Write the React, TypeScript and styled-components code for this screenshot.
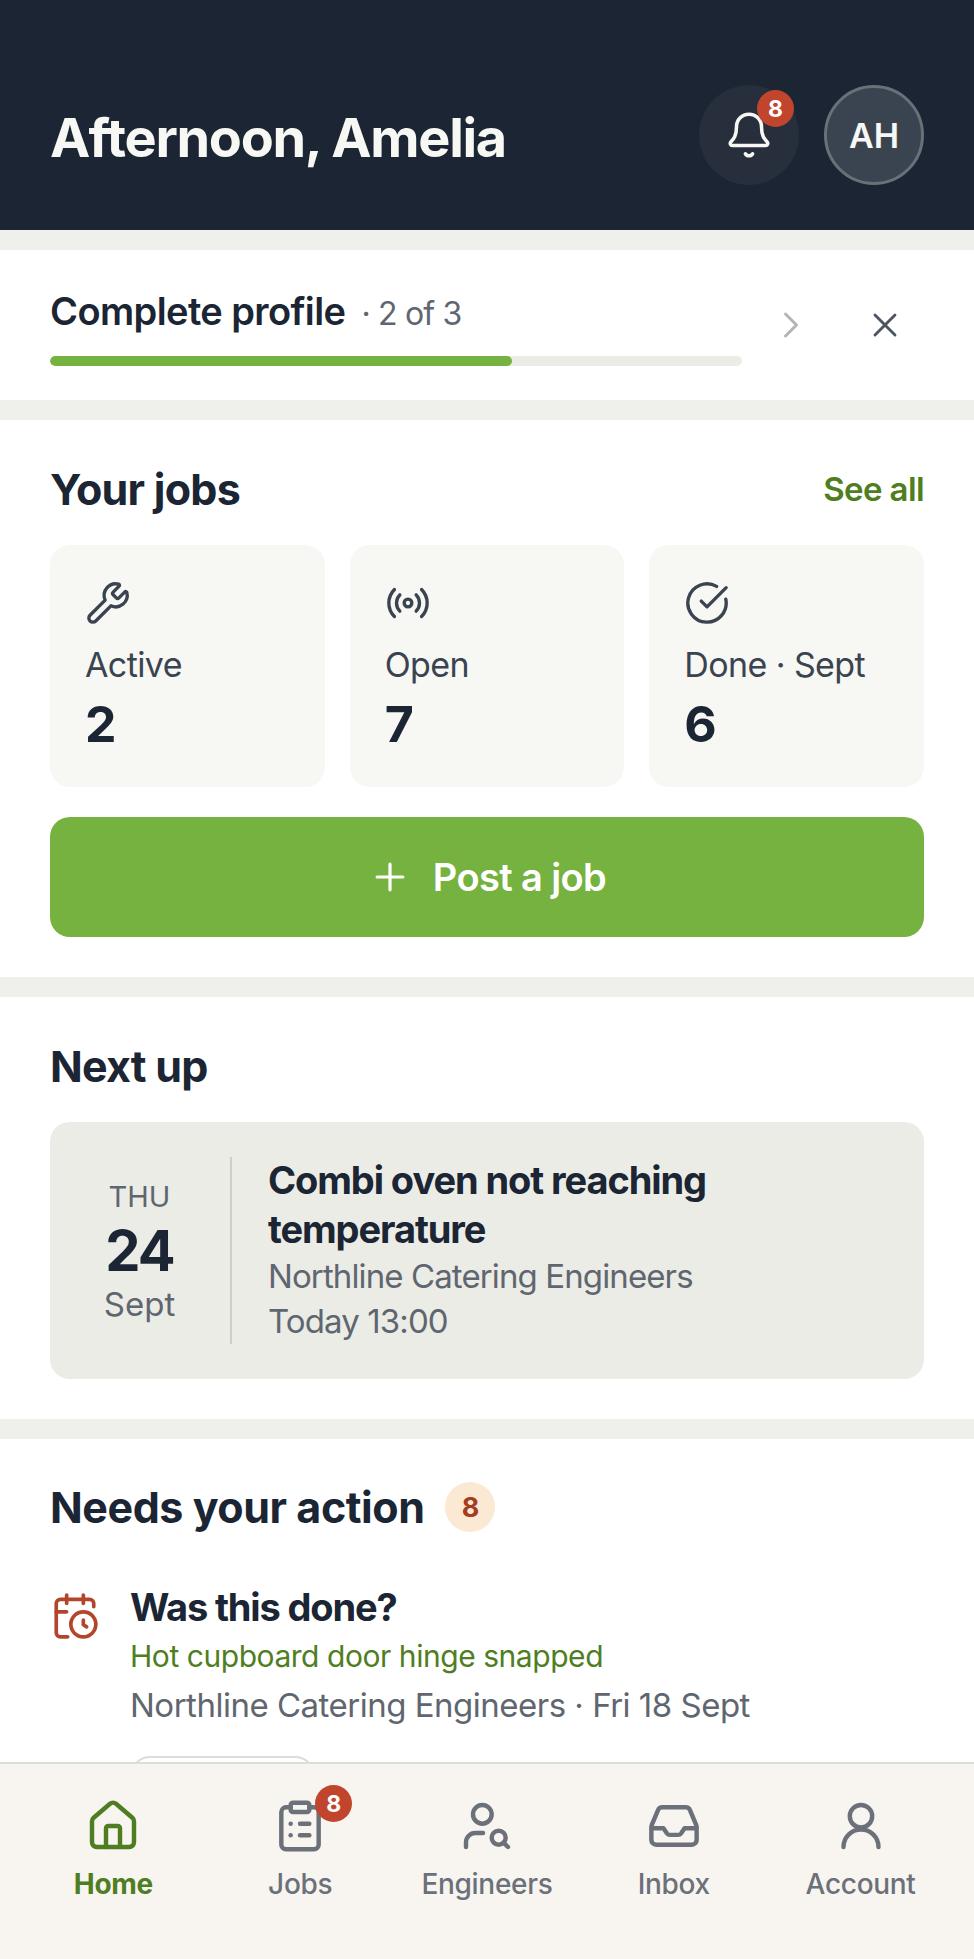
import React from 'react';
import styled, { createGlobalStyle } from 'styled-components';
import { Bell, CalendarClock, CircleCheckBig, ChevronRight, ClipboardList, House, Plus, Radio, UserSearch, Wrench, X } from 'lucide-react';

const GlobalStyle = createGlobalStyle`
  html, body {
    margin: 0;
    padding: 0;
    height: 100%;
    overflow: hidden;
    background: #eff0eb;
  }
  * {
    box-sizing: border-box;
  }
`;

const Screen = styled.div`
  display: flex;
  flex-direction: column;
  height: 100vh;
  font-family: Inter, 'Liberation Sans', sans-serif;
  color: #1b2533;
`;

const Content = styled.main`
  flex: 1;
  min-height: 0;
  overflow: hidden;
  display: flex;
  flex-direction: column;
  gap: 20px;
`;

const Header = styled.header`
  height: 230px;
  flex-shrink: 0;
  background: #1b2533;
  padding: 85px 50px 45px;
  display: flex;
  align-items: center;
  justify-content: space-between;
`;

const Greeting = styled.h1`
  margin: 5px 0 0;
  font-size: 54px;
  font-weight: 700;
  letter-spacing: -1.3px;
  color: #f7f7f3;
`;

const HeaderActions = styled.div`
  display: flex;
  gap: 25px;
`;

const BellButton = styled.div`
  position: relative;
  width: 100px;
  height: 100px;
  border-radius: 50%;
  background: #262f3b;
  display: flex;
  align-items: center;
  justify-content: center;
  color: #f7f7f3;
`;

const CountBadge = styled.span<{ top: number; right: number }>`
  position: absolute;
  top: ${p => p.top}px;
  right: ${p => p.right}px;
  width: 37px;
  height: 37px;
  border-radius: 50%;
  background: #c1452d;
  color: #fff;
  font-size: 23px;
  font-weight: 700;
  display: flex;
  align-items: center;
  justify-content: center;
`;

const Avatar = styled.div`
  width: 100px;
  height: 100px;
  border-radius: 50%;
  background: #3a4450;
  border: 3px solid #6a7077;
  color: #f7f7f3;
  font-size: 34px;
  font-weight: 600;
  display: flex;
  align-items: center;
  justify-content: center;
`;

const ProfileCard = styled.section`
  height: 150px;
  flex-shrink: 0;
  background: #fff;
  padding: 0 50px;
  display: flex;
  align-items: center;
`;

const ProfileInfo = styled.div`
  width: 692px;
  margin-top: 4px;
`;

const ProfileTitle = styled.div`
  display: flex;
  align-items: baseline;
  gap: 16px;
  font-size: 38px;
  font-weight: 600;
  letter-spacing: -0.6px;
  line-height: 44px;
`;

const ProfileStep = styled.span`
  font-size: 32px;
  font-weight: 400;
  letter-spacing: -0.8px;
  color: #5f6670;
`;

const ProgressTrack = styled.div`
  height: 10px;
  margin-top: 20px;
  border-radius: 5px;
  background: #ebece6;
  overflow: hidden;
`;

const ProgressFill = styled.div`
  height: 100%;
  border-radius: 5px;
  background: #76b23f;
`;

const ProfileActions = styled.div`
  margin-left: auto;
  display: flex;
  align-items: center;
  gap: 52px;
  padding-right: 19px;
`;

const Section = styled.section`
  flex-shrink: 0;
  background: #fff;
  padding: 34px 50px 40px;
`;

const ActionSection = styled(Section)`
  padding-top: 43px;
`;

const SectionHead = styled.div`
  display: flex;
  align-items: center;
  justify-content: space-between;
  height: 70px;
  margin-bottom: 21px;
`;

const SectionTitle = styled.h2`
  margin: 0;
  font-size: 43px;
  font-weight: 700;
  letter-spacing: -0.75px;
`;

const ActionSectionTitle = styled(SectionTitle)`
  letter-spacing: -0.45px;
`;

const SeeAll = styled.a`
  font-size: 33px;
  font-weight: 600;
  letter-spacing: -0.6px;
  color: #4f7e22;
`;

const StatGrid = styled.div`
  display: grid;
  grid-template-columns: repeat(3, 1fr);
  gap: 25px;
`;

const StatCard = styled.div`
  height: 242px;
  padding: 35px 35px 0;
  border-radius: 20px;
  background: #f7f7f3;
  color: #3a4450;
`;

const StatLabel = styled.div`
  margin-top: 13px;
  font-size: 34px;
  line-height: 44px;
  letter-spacing: -0.6px;
`;

const StatValue = styled.div`
  margin-top: 7px;
  font-size: 50px;
  line-height: 60px;
  font-weight: 700;
  color: #1b2533;
`;

const PostButton = styled.button`
  width: 100%;
  height: 120px;
  margin-top: 30px;
  border: 0;
  border-radius: 20px;
  background: #76b23f;
  color: #fff;
  font-family: inherit;
  font-size: 38px;
  font-weight: 600;
  letter-spacing: -0.6px;
  display: flex;
  align-items: center;
  justify-content: center;
  gap: 21px;
`;

const NextCard = styled.div`
  height: 257px;
  padding: 35px 35px;
  border-radius: 20px;
  background: #ebece6;
  display: flex;
`;

const DateBlock = styled.div`
  width: 147px;
  padding-right: 36px;
  border-right: 2px solid #cdcec9;
  display: flex;
  flex-direction: column;
  align-items: center;
  justify-content: center;
`;

const DateDay = styled.div`
  font-size: 29px;
  line-height: 36px;
  color: #5f6670;
`;

const DateNumber = styled.div`
  font-size: 56px;
  line-height: 68px;
  font-weight: 700;
  letter-spacing: -2px;
  padding-top: 2px;
`;

const DateMonth = styled.div`
  font-size: 33px;
  line-height: 38px;
  color: #5f6670;
`;

const NextInfo = styled.div`
  padding-left: 36px;
  margin-top: -1px;
`;

const NextTitle = styled.div`
  font-size: 38px;
  line-height: 49px;
  font-weight: 700;
  letter-spacing: -1.08px;
  width: 480px;
`;

const NextMeta = styled.div`
  font-size: 33px;
  line-height: 45px;
  letter-spacing: -0.89px;
  color: #5f6670;
`;

const ActionHead = styled.div`
  display: flex;
  align-items: center;
  gap: 21px;
  height: 50px;
`;

const ActionCount = styled.span`
  width: 50px;
  height: 50px;
  border-radius: 50%;
  background: #fbe9d3;
  color: #a33e1f;
  font-size: 27px;
  font-weight: 700;
  display: flex;
  align-items: center;
  justify-content: center;
`;

const ActionRow = styled.div`
  display: flex;
  gap: 30px;
  margin-top: 51px;
`;

const ActionIcon = styled.div`
  width: 50px;
  flex-shrink: 0;
  padding-top: 8px;
  color: #b2452a;
`;

const ActionTitle = styled.div`
  font-size: 38px;
  line-height: 49px;
  font-weight: 700;
  letter-spacing: -1.15px;
`;

const ActionJob = styled.div`
  font-size: 30px;
  line-height: 49px;
  letter-spacing: -0.45px;
  color: #4f7e22;
`;

const ActionMeta = styled.div`
  font-size: 33px;
  line-height: 48px;
  letter-spacing: -0.5px;
  color: #5f6670;
`;

const GhostButton = styled.button`
  display: block;
  width: 185px;
  height: 80px;
  margin-top: 27px;
  border: 2px solid #dcddd7;
  border-radius: 20px;
  background: #fff;
`;

const BottomNav = styled.nav`
  height: 197px;
  flex-shrink: 0;
  border-top: 2px solid #dcddd7;
  background: #f8f5f0;
  padding: 34px 20px 0;
  display: grid;
  grid-template-columns: repeat(5, 1fr);
`;

const NavItem = styled.div<{ active?: boolean }>`
  position: relative;
  display: flex;
  flex-direction: column;
  align-items: center;
  height: fit-content;
  gap: 13px;
  font-size: 28px;
  font-weight: ${p => (p.active ? 700 : 500)};
  letter-spacing: -0.3px;
  color: ${p => (p.active ? '#4f7e22' : '#6b7079')};
`;

const NavIcon = styled.div`
  position: relative;
  width: 56px;
  height: 56px;
`;

function InboxIcon({ size }: { size: number }) {
  return (
    <svg width={size} height={size} viewBox="0 0 24 24" fill="none" stroke="currentColor" strokeWidth={1.9} strokeLinecap="round" strokeLinejoin="round">
      <path d="M2.500 13h5l1.500 2.200c.3.400.7.600 1.200.600h3.600c.5 0 .9-.2 1.200-.6L16.500 13h5" />
      <path d="M7 4h10c.8 0 1.500.4 1.800 1.100l2.700 6.400c.1.300.2.600.2.900V18c0 1.100-.9 2-2 2H4.300c-1.100 0-2-.9-2-2v-5.600c0-.3.100-.6.200-.9l2.700-6.400C5.500 4.400 6.200 4 7 4Z" />
    </svg>
  );
}

function AccountIcon({ size }: { size: number }) {
  return (
    <svg width={size} height={size} viewBox="0 0 24 24" fill="none" stroke="currentColor" strokeWidth={1.9} strokeLinecap="round" strokeLinejoin="round">
      <circle cx="12" cy="7.800" r="4.800" />
      <path d="M4.500 21a7.500 7.500 0 0 1 15 0" />
    </svg>
  );
}

export default function App() {
  return (
    <>
      <GlobalStyle />
      <Screen>
        <Content>
          <Header>
            <Greeting>Afternoon, Amelia</Greeting>
            <HeaderActions>
              <BellButton>
                <Bell size={50} strokeWidth={1.7} />
                <CountBadge top={5} right={5}>8</CountBadge>
              </BellButton>
              <Avatar>AH</Avatar>
            </HeaderActions>
          </Header>

          <ProfileCard>
            <ProfileInfo>
              <ProfileTitle>
                Complete profile
                <ProfileStep>· 2 of 3</ProfileStep>
              </ProfileTitle>
              <ProgressTrack>
                <ProgressFill style={{ width: `${(462 / 692) * 100}%` }} />
              </ProgressTrack>
            </ProfileInfo>
            <ProfileActions>
              <ChevronRight size={44} strokeWidth={1.6} color="#b4b5b2" />
              <X size={40} strokeWidth={1.7} color="#4d5560" />
            </ProfileActions>
          </ProfileCard>

          <Section>
            <SectionHead>
              <SectionTitle>Your jobs</SectionTitle>
              <SeeAll>See all</SeeAll>
            </SectionHead>
            <StatGrid>
              <StatCard>
                <Wrench size={46} strokeWidth={1.75} />
                <StatLabel>Active</StatLabel>
                <StatValue>2</StatValue>
              </StatCard>
              <StatCard>
                <Radio size={46} strokeWidth={1.75} />
                <StatLabel>Open</StatLabel>
                <StatValue>7</StatValue>
              </StatCard>
              <StatCard>
                <CircleCheckBig size={46} strokeWidth={1.75} />
                <StatLabel>Done · Sept</StatLabel>
                <StatValue>6</StatValue>
              </StatCard>
            </StatGrid>
            <PostButton>
              <Plus size={44} strokeWidth={1.75} />
              Post a job
            </PostButton>
          </Section>

          <Section>
            <SectionHead>
              <SectionTitle>Next up</SectionTitle>
            </SectionHead>
            <NextCard>
              <DateBlock>
                <DateDay>THU</DateDay>
                <DateNumber>24</DateNumber>
                <DateMonth>Sept</DateMonth>
              </DateBlock>
              <NextInfo>
                <NextTitle>Combi oven not reaching temperature</NextTitle>
                <NextMeta>Northline Catering Engineers</NextMeta>
                <NextMeta>Today 13:00</NextMeta>
              </NextInfo>
            </NextCard>
          </Section>

          <ActionSection>
            <ActionHead>
              <ActionSectionTitle>Needs your action</ActionSectionTitle>
              <ActionCount>8</ActionCount>
            </ActionHead>
            <ActionRow>
              <ActionIcon>
                <CalendarClock size={50} strokeWidth={1.75} />
              </ActionIcon>
              <div>
                <ActionTitle>Was this done?</ActionTitle>
                <ActionJob>Hot cupboard door hinge snapped</ActionJob>
                <ActionMeta>Northline Catering Engineers · Fri 18 Sept</ActionMeta>
                <GhostButton />
              </div>
            </ActionRow>
          </ActionSection>
        </Content>

        <BottomNav>
          <NavItem active>
            <NavIcon><House size={56} strokeWidth={1.9} /></NavIcon>
            Home
          </NavItem>
          <NavItem>
            <NavIcon>
              <ClipboardList size={56} strokeWidth={1.9} />
              <CountBadge top={-13} right={-24}>8</CountBadge>
            </NavIcon>
            Jobs
          </NavItem>
          <NavItem>
            <NavIcon><UserSearch size={56} strokeWidth={1.9} /></NavIcon>
            Engineers
          </NavItem>
          <NavItem>
            <NavIcon><InboxIcon size={56} /></NavIcon>
            Inbox
          </NavItem>
          <NavItem>
            <NavIcon><AccountIcon size={56} /></NavIcon>
            Account
          </NavItem>
        </BottomNav>
      </Screen>
    </>
  );
}
